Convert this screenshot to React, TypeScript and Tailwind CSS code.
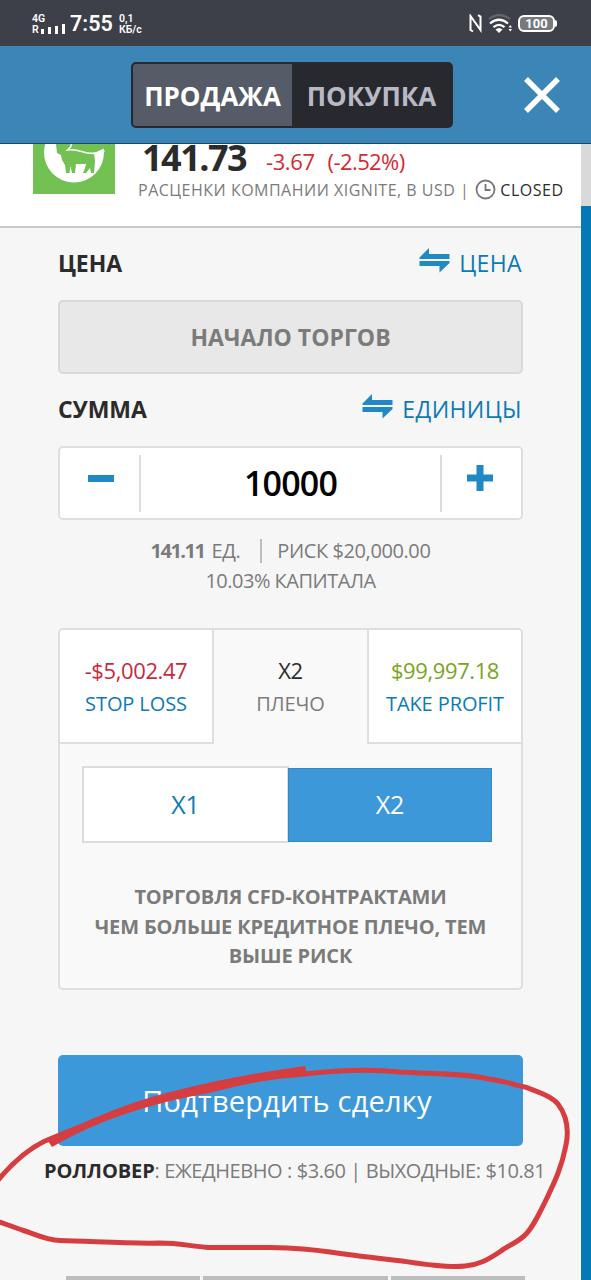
import React from "react";

const SwapIcon = () => (
  <svg className="shrink-0" width="31" height="26" viewBox="0 0 31 26" fill="#2088c4">
    <path d="M0.5 11V9.5L10 0v6h20.5v5z" />
    <path d="M0.5 13h30v2L20.500 24.500v-6.500H0.500z" />
  </svg>
);

const NfcIcon = () => (
  <svg width="13" height="19" viewBox="0 0 13 19" fill="none" stroke="#fff" strokeWidth="2">
    <path d="M4 17.500L1.500 16V2l10 14V2.500L9 1.200" />
  </svg>
);

const WifiIcon = () => (
  <svg width="24" height="19" viewBox="0 0 24 19" fill="none" stroke="#fff" strokeWidth="2.200">
    <path d="M1 5q10-8 21 0" stroke="#64666e" />
    <path d="M2 9.500q9-7.500 18 0M5.500 13.200q5.500-4.500 11 0" />
    <path d="M7.500 15.500q3.500-3 7 0l-3.500 3.500z" fill="#fff" stroke="none" />
    <path d="M20.500 13.500l1.800-2.500 1.700 2.500zM20.500 15l1.800 2.500L24 15z" fill="#fff" stroke="none" />
  </svg>
);

const StatusBar = () => (
  <div className="flex h-[46px] items-center bg-[#3d3f49] pl-[32px] pr-[34px] pt-[1px] font-['Roboto'] text-white">
    <div className="flex h-[22px] w-[33px] flex-col text-[10.500px] font-semibold leading-[11px]">
      <span>4G</span>
      <div className="flex items-end gap-[4px]">
        <span className="w-[5px]">R</span>
        <i className="mb-[1px] h-[5px] w-[3px] bg-white" />
        <i className="mb-[1px] h-[7px] w-[3px] bg-white" />
        <i className="mb-[1px] h-[8px] w-[3px] bg-white" />
        <i className="mb-[1px] h-[10px] w-[3px] bg-white" />
      </div>
    </div>
    <span className="ml-[5px] w-[43px] whitespace-nowrap text-[21.500px] font-semibold leading-none">7:55</span>
    <div className="ml-[6px] text-[10.500px] font-semibold leading-[11px]">
      <div>0,1</div>
      <div>КБ/с</div>
    </div>
    <div className="-mt-[1px] ml-auto flex items-center">
      <NfcIcon />
      <span className="ml-[6px]"><WifiIcon /></span>
      <div className="ml-[6px] flex h-[17px] w-[37px] items-center justify-center rounded-[6px] border-2 border-white bg-[#77797c] text-[13px] font-bold leading-none">
        100
      </div>
      <i className="h-[7px] w-[2px] rounded-r bg-white" />
    </div>
  </div>
);

const Header = () => (
  <div className="flex h-[98px] items-center border-b border-[#1c4867] bg-[#3b85b7] pl-[131px] pr-[31px]">
    <div className="flex h-[66px] w-[322px] overflow-hidden rounded-[5px] border-2 border-[#28292f] bg-[#28292f] text-[26px] font-bold">
      <div className="flex w-[159px] items-center justify-center bg-[#555b67] pt-[3px] text-white">ПРОДАЖА</div>
      <div className="flex flex-1 items-center justify-center pt-[3px] text-[#b9b9c6]">ПОКУПКА</div>
    </div>
    <svg className="ml-auto" width="36" height="36" viewBox="0 0 36 36" stroke="#fff" strokeWidth="5.500">
      <path d="M2 2l32 32M34 2L2 34" />
    </svg>
  </div>
);

const CattleLogo = () => (
  <svg className="ml-[33px] shrink-0" width="82" height="50" viewBox="33 144 82 50">
    <path fill="#72c152" d="M33 144h82v50H33z" />
    <circle cx="74" cy="152.500" r="30" fill="#fff" />
    <path fill="#72c152" d="M56 144l1 9 4 2 1 5 3 5 1 8h3.500l1-7 1.500 7h3l1-9h10l-1 4-2 5h3l4-5 1 5h3l1-12-1-8 11-5v-4z" />
    <path fill="none" stroke="#fff" strokeWidth="1.600" d="M71.500 144l-1 3-3 3q7-1 14 1.500 12 4 23-0.500" />
  </svg>
);

const Quote = () => (
  <div className="flex h-[84px] border-b-2 border-[#c9c9c9] bg-white">
    <CattleLogo />
    <div className="ml-[23px] flex flex-col whitespace-nowrap">
      <div className="flex h-[30px] items-end">
        <span className="-mb-[2px] ml-[4px] w-[124px] text-[36px] font-bold leading-[36px] tracking-[-1.5px] text-[#2b2b2b]">141.73</span>
        <span className="-mb-[1px] text-[22px] leading-[28px] tracking-[-0.4px] text-[#d32a35]">-3.67</span>
        <span className="-mb-[1px] ml-[13px] text-[22px] leading-[28px] tracking-[-0.6px] text-[#d32a35]">(-2.52%)</span>
      </div>
      <div className="flex h-[31px] items-center text-[16px] tracking-[0.5px] text-[#7b7b7b]">
        <span>РАСЦЕНКИ КОМПАНИИ XIGNITE, В USD |</span>
        <svg className="ml-[6px]" width="21" height="21" viewBox="0 0 21 21" fill="none" stroke="#777" strokeWidth="1.800">
          <circle cx="10.500" cy="10.500" r="9" />
          <path d="M10.500 5v6H15.500" />
        </svg>
        <span className="ml-[4px] text-[#2b2b2b]">CLOSED</span>
      </div>
    </div>
  </div>
);

interface FieldHeadProps {
  title: string;
  action: string;
}

const FieldHead: React.FC<FieldHeadProps> = ({ title, action }) => (
  <div className="flex h-[73px] items-center pb-[2px] text-[23px]">
    <span className="font-bold tracking-[-0.1px] text-[#2b2b2b]">{title}</span>
    <span className="-mt-[6px] ml-auto mr-[9px]"><SwapIcon /></span>
    <span className="mr-[1px] font-medium tracking-[0.4px] text-[#0d7ab5]">{action}</span>
  </div>
);

const AmountStepper = () => (
  <div className="-mt-px flex h-[74px] items-center rounded-[5px] border-2 border-[#dedede] bg-white">
    <div className="flex h-[57px] w-[81px] justify-center border-r-2 border-[#dcdcdc] pl-[2px] pt-[20px]">
      <i className="h-[7px] w-[26px] bg-[#2088c4]" />
    </div>
    <div className="flex-1 text-center text-[34px] font-semibold tracking-[-0.8px] text-black">10000</div>
    <div className="flex h-[57px] w-[81px] justify-center border-l-2 border-[#dcdcdc] pr-[3px] pt-[10px]">
      <svg width="26" height="26" viewBox="0 0 26 26" fill="#2088c4">
        <path d="M9.500 0h7v9.500H26v7h-9.500V26h-7v-9.500H0v-7h9.500z" />
      </svg>
    </div>
  </div>
);

const tabs = [
  { value: "-$5,002.47", label: "STOP LOSS", box: "w-[154px] border-b-2 border-r-2 bg-white", color: "text-[#c62b3b]", labelColor: "text-[#0d7ab5]" },
  { value: "X2", label: "ПЛЕЧО", box: "w-[153px]", color: "text-[#2b2b2b]", labelColor: "text-[#7b7b7b]" },
  { value: "$99,997.18", label: "TAKE PROFIT", box: "w-[154px] border-b-2 border-l-2 bg-white", color: "text-[#78a51c]", labelColor: "text-[#0d7ab5]" },
];

const Leverage = () => (
  <div className="mt-[32px] h-[362px] overflow-hidden rounded-[5px] border-2 border-[#dedede] bg-[#f9f9f9]">
    <div className="flex h-[114px]">
      {tabs.map((tab) => (
        <div key={tab.label} className={`flex flex-col items-center whitespace-nowrap border-[#dedede] pt-[24px] ${tab.box}`}>
          <span className={`text-[22px] leading-[33px] tracking-[-0.4px] ${tab.color}`}>{tab.value}</span>
          <span className={`text-[20px] leading-[33px] tracking-[-0.1px] ${tab.labelColor}`}>{tab.label}</span>
        </div>
      ))}
    </div>
    <div className="mx-[22px] mt-[22px] flex h-[77px] items-center text-[25px]">
      <div className="flex h-[77px] w-[207px] items-center justify-center border-2 border-[#dcdcdc] bg-white text-[#0d7ab5]">X1</div>
      <div className="-ml-px flex h-[74px] w-[204px] items-center justify-center border border-[#3c86c0] bg-[#3d98da] text-white">X2</div>
    </div>
    <p className="mt-[39px] text-center text-[20px] font-bold leading-[29.500px] tracking-[-0.15px] text-[#7b7b7b]">
      ТОРГОВЛЯ CFD-КОНТРАКТАМИ
      <br />
      ЧЕМ БОЛЬШЕ КРЕДИТНОЕ ПЛЕЧО, ТЕМ
      <br />
      ВЫШЕ РИСК
    </p>
  </div>
);

// freehand marker loop around the rollover line
const Marker = () => (
  <svg className="pointer-events-none absolute left-0 top-0" width="591" height="1280" viewBox="0 0 591 1280" fill="none">
    <path
      d="M-6 1185C6 1170 24 1151 45 1141C95 1120 150 1101 205 1090C245 1080 275 1076 305 1074C340 1070 370 1069 400 1072C435 1074 463 1073 489 1079C505 1081 515 1085 525 1087C541 1093 552 1097 558 1104C567 1116 569 1130 566 1145C561 1171 552 1187 545 1202C538 1216 532 1229 524 1236C515 1244 507 1246 501 1251C488 1260 478 1265 465 1266C446 1268 422 1264 402 1261C375 1258 350 1255 330 1252C310 1249 290 1248 270 1247.500H208C190 1246 177 1243 160 1243C130 1244 90 1241 60 1240.500C45 1240 35 1234 22 1230L-6 1220"
      stroke="#d63d41"
      strokeWidth="5"
    />
    <path d="M48 1141C80 1123 120 1105 170 1092C215 1080 260 1072 305 1066L307 1074C265 1079 230 1088 205 1094C155 1102 100 1119 52 1147z" fill="#d63d41" />
  </svg>
);

export default function App() {
  return (
    <div className="relative h-[1280px] w-[591px] overflow-hidden bg-[#f6f6f6] font-['Open_Sans',sans-serif]">
      <StatusBar />
      <Header />
      <div className="flex h-[1136px]">
        <div className="w-[581px]">
          <Quote />
          <div className="mx-[58px] w-[465px]">
            <FieldHead title="ЦЕНА" action="ЦЕНА" />
            <div className="-mt-px flex h-[74px] items-center justify-center rounded-[5px] border-2 border-[#d9d9d9] bg-[#e8e8e8] text-[23px] font-bold text-[#7b7b7b]">
              НАЧАЛО ТОРГОВ
            </div>
            <FieldHead title="СУММА" action="ЕДИНИЦЫ" />
            <AmountStepper />
            <div className="mt-[16px] flex h-[30px] items-center justify-center text-[20px] tracking-[-0.4px] text-[#7b7b7b]">
              <b className="tracking-[-1.5px]">141.11</b>
              <span className="ml-[7px]">ЕД.</span>
              <i className="ml-[20px] mr-[15px] h-[24px] w-[2px] bg-[#bcbcbc]" />
              <span>РИСК $20,000.00</span>
            </div>
            <div className="text-center text-[20px] leading-[30px] tracking-[-0.5px] text-[#7b7b7b]">10.03% КАПИТАЛА</div>
            <Leverage />
            <div className="mt-[65px] flex h-[91px] items-center justify-center rounded-[5px] bg-[#3d98da] pr-[7px] text-[29px] tracking-[0.2px] text-white">
              Подтвердить сделку
            </div>
          </div>
          <div className="ml-[44px] mt-[10px] whitespace-nowrap text-[20px] leading-[30px] tracking-[-0.42px] text-[#7b7b7b]">
            <b className="tracking-[-0.1px] text-[#2b2b2b]">РОЛЛОВЕР</b>: ЕЖЕДНЕВНО : $3.60 | ВЫХОДНЫЕ: $10.81
          </div>
          <div className="ml-[66px] mt-[90px] flex h-[4px] gap-[3px]">
            <i className="w-[134px] bg-[#bdbdbd]" />
            <i className="w-[185px] bg-[#bdbdbd]" />
            <i className="w-[134px] bg-[#bdbdbd]" />
          </div>
        </div>
        <div className="w-[10px] bg-[#0479b8]">
          <div className="h-[62px] bg-[#d9d9d9]" />
        </div>
      </div>
      <Marker />
    </div>
  );
}
